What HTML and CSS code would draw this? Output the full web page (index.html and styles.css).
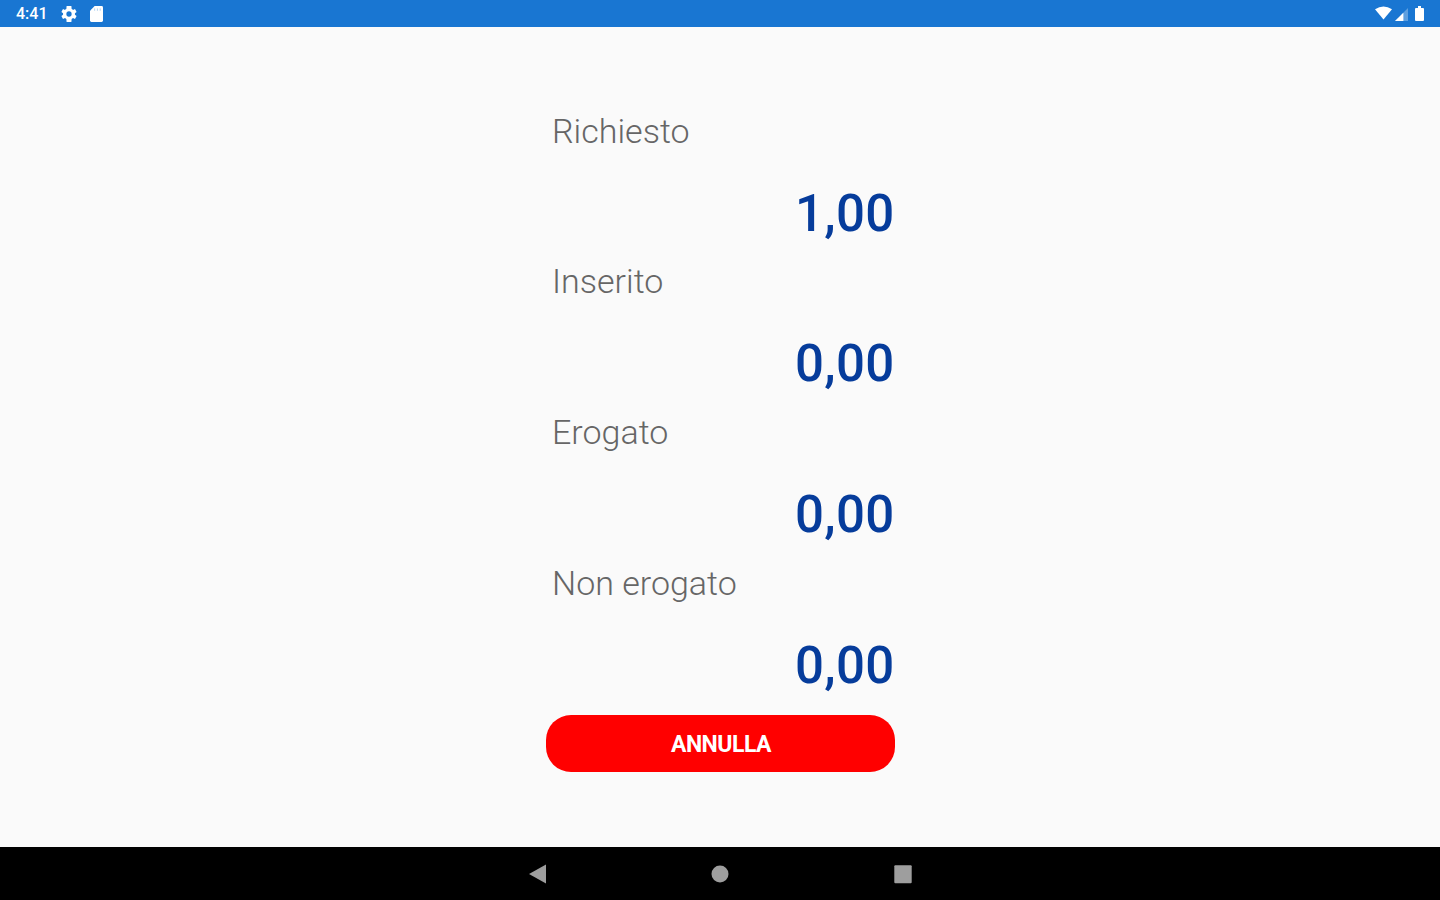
FILE: index.html
```html
<!DOCTYPE html>
<html lang="it">
<head>
  <meta charset="UTF-8" />
  <meta name="viewport" content="width=device-width, initial-scale=1" />
  <title>Pagamento</title>
  <link rel="stylesheet" href="styles.css">
</head>
<body>
  <header class="status-bar">
    <span class="clock">4:41</span>
    <svg class="icon-gear" viewBox="2 2 20 20" aria-hidden="true">
      <path d="M19.4 13a7.500 7.500 0 0 0 0-2l2.100-1.600-2-3.500-2.500 1a7.500 7.500 0 0 0-1.700-1L15 2H9l-.3 3.900a7.500 7.500 0 0 0-1.700 1l-2.500-1-2 3.500L4.600 11a7.500 7.500 0 0 0 0 2l-2.100 1.600 2 3.500 2.500-1a7.500 7.500 0 0 0 1.700 1L9 22h6l.3-3.900a7.500 7.500 0 0 0 1.700-1l2.500 1 2-3.500zM12 15.300a3.300 3.300 0 1 1 0-6.600 3.300 3.300 0 0 1 0 6.600z" />
    </svg>
    <svg class="icon-card" viewBox="0 0 14 17" aria-hidden="true">
      <path d="M5 0h7.500Q14 0 14 1.500v14q0 1.500-1.500 1.500h-11Q0 17 0 15.500V5z" />
      <path class="slots" d="M5 2.500v2.500M8 2.500v2.500M11 2.500v2.500" />
    </svg>
    <div class="status-right">
      <svg class="icon-wifi" viewBox="0 0 18 14" aria-hidden="true">
        <path d="M0 3Q9-3 18 3L9 14z" />
      </svg>
      <svg class="icon-signal" viewBox="0 0 14 14" aria-hidden="true">
        <path class="faded" d="M14 0v14H0z" />
        <path d="M9 5v9H0z" />
      </svg>
      <svg class="icon-battery" viewBox="0 0 9 15" aria-hidden="true">
        <path d="M3 0h3v2h2q1 0 1 1v11q0 1-1 1H1q-1 0-1-1V3q0-1 1-1h2z" />
      </svg>
    </div>
  </header>

  <main class="payment">
    <dl class="amounts">
      <div class="amount">
        <dt>Richiesto</dt>
        <dd>1,00</dd>
      </div>
      <div class="amount">
        <dt>Inserito</dt>
        <dd>0,00</dd>
      </div>
      <div class="amount">
        <dt>Erogato</dt>
        <dd>0,00</dd>
      </div>
      <div class="amount">
        <dt>Non erogato</dt>
        <dd>0,00</dd>
      </div>
    </dl>
    <button type="button" class="btn-cancel">ANNULLA</button>
  </main>

  <nav class="nav-bar">
    <svg viewBox="0 0 20 20" aria-label="Indietro"><path d="M1 10L18 .500v19z" /></svg>
    <svg viewBox="0 0 20 20" aria-label="Home"><circle cx="10" cy="10" r="8.500" /></svg>
    <svg viewBox="0 0 20 20" aria-label="Recenti"><rect x="1.300" y="1.300" width="17.400" height="18" rx="1" /></svg>
  </nav>
</body>
</html>
```
FILE: styles.css
```css
:root {
  --bar: #1976d2;
  --bg: #fafafa;
  --label: #666;
  --value: #063c9b;
  --cancel: #ff0000;
}
* {
  box-sizing: border-box;
}
body {
  margin: 0;
  height: 100vh;
  display: flex;
  flex-direction: column;
  font-family: Roboto, sans-serif;
  background-color: var(--bg);
  overflow: hidden;
}
.status-bar {
  height: 27px;
  flex: none;
  display: flex;
  align-items: center;
  padding: 1px 15px 0;
  background-color: var(--bar);
  color: #fff;
}
.status-bar svg {
  fill: #fff;
}
.clock {
  width: 46px;
  padding-left: 1px;
  font-size: 16px;
  font-weight: 500;
  line-height: 26px;
}
.icon-gear {
  width: 16px;
  height: 16px;
  margin-right: 13px;
}
.icon-card {
  width: 13px;
  height: 16px;
}
.slots {
  stroke: var(--bar);
  stroke-opacity: 0.35;
  stroke-width: 1;
}
.status-right {
  display: flex;
  align-items: center;
  margin-left: auto;
}
.icon-wifi {
  width: 17px;
  height: 14px;
  margin: 0 3px 2px 0;
}
.icon-signal {
  width: 13px;
  height: 13px;
  margin: 0 7px 0 0;
}
.faded {
  opacity: 0.3;
}
.icon-battery {
  width: 9px;
  height: 15px;
  margin: 0 1px 2px 0;
}
.payment {
  flex: 1;
  width: 349px;
  margin: 0 auto;
  padding-top: 73.6px;
}
.amounts {
  margin: 0 0 11.4px;
  padding: 0 0 0 6.5px;
}
.amount {
  height: 150.7px;
}
dt {
  font-size: 34px;
  font-weight: 300;
  line-height: 60px;
  color: var(--label);
}
dd {
  margin: 15px 0 0;
  font-size: 51px;
  font-weight: 500;
  line-height: 75px;
  letter-spacing: 0.3px;
  text-align: right;
  color: var(--value);
}
.btn-cancel {
  display: block;
  width: 100%;
  height: 57px;
  padding: 2px 0 0 2px;
  border: none;
  border-radius: 25px;
  background-color: var(--cancel);
  color: #fff;
  font-family: inherit;
  font-size: 23px;
  font-weight: 700;
  letter-spacing: -0.5px;
  cursor: pointer;
}
.nav-bar {
  height: 53px;
  flex: none;
  display: flex;
  justify-content: center;
  align-items: center;
  gap: 162.5px;
  background-color: #000;
}
.nav-bar svg {
  width: 20px;
  height: 20px;
  fill: #9e9e9e;
}
```
